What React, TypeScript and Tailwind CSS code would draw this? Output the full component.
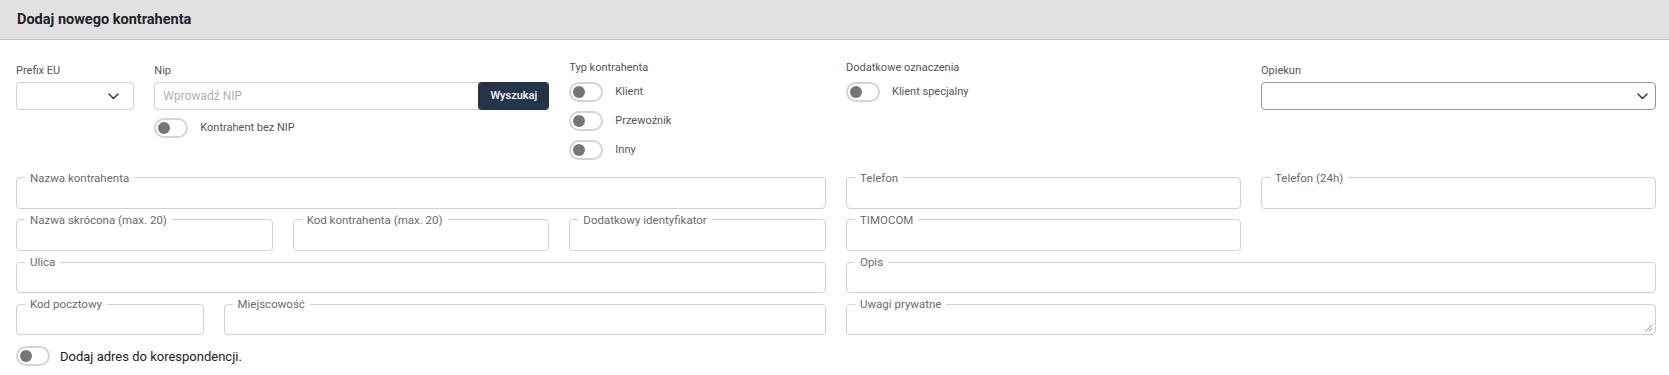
import React from "react";

function Toggle() {
  return (
    <span className="w-[34px] h-[20px] shrink-0 rounded-full border-2 border-[#d4d4d4] bg-white flex items-center pl-[2px]">
      <span className="w-[12px] h-[12px] rounded-full bg-[#767676]" />
    </span>
  );
}

function ToggleRow({ label }: { label: string }) {
  return (
    <div className="flex items-center gap-3">
      <Toggle />
      <span className="text-[11px] leading-[14px] text-[#555]">{label}</span>
    </div>
  );
}

function Chevron({ className }: { className?: string }) {
  return (
    <svg className={className} width="11" height="7" viewBox="0 0 11 7" fill="none">
      <path d="M1 1l4.5 4.5L10 1" stroke="#3a3a3a" strokeWidth="1.5" strokeLinecap="round" strokeLinejoin="round" />
    </svg>
  );
}

function Field({ label, grip }: { label: string; grip?: boolean }) {
  return (
    <fieldset className="relative h-[38px] border border-[#d0d1d6] rounded-[4px] min-w-0">
      <legend className="ml-2 px-[5px] text-[11.5px] leading-[14px] text-[#6b6b6b]">{label}</legend>
      {grip && (
        <svg className="absolute right-[2px] bottom-[2px]" width="8" height="8" viewBox="0 0 8 8">
          <path d="M7 1L1 7M7 4L4 7" stroke="#888" strokeWidth="0.9" />
        </svg>
      )}
    </fieldset>
  );
}

export default function App() {
  return (
    <div className="w-[1669px] min-h-[375px] bg-white [font-family:Roboto,'Liberation_Sans',sans-serif]">
      <div className="h-10 bg-[#e1e1e1] border-b border-[#c4c4c4] flex items-center pl-[17px]">
        <h1 className="text-[14.5px] font-bold text-[#1e2229]">Dodaj nowego kontrahenta</h1>
      </div>

      <div className="pl-4 pr-[13px]">
        <div className="grid grid-cols-12 gap-x-5">
          <div className="col-span-1 pt-6 flex flex-col">
            <label className="text-[11px] leading-[14px] text-[#555] mb-1">Prefix EU</label>
            <div className="h-[28px] border border-[#cfd0d4] rounded-[4px] flex items-center justify-end pr-[14px]">
              <Chevron />
            </div>
          </div>

          <div className="col-span-3 pt-6 flex flex-col">
            <label className="text-[11px] leading-[14px] text-[#555] mb-1">Nip</label>
            <div className="flex h-[28px]">
              <div className="flex-1 border border-[#cfd0d4] rounded-l-[4px] flex items-center pl-[8px] text-[12px] text-[#b0b0b0]">
                Wprowadź NIP
              </div>
              <button className="relative -ml-[2px] w-[71px] h-[28px] rounded-[4px] bg-[#263449] text-white text-[11px] font-medium">
                Wyszukaj
              </button>
            </div>
            <div className="mt-2">
              <ToggleRow label="Kontrahent bez NIP" />
            </div>
          </div>

          <div className="col-span-2 pt-[21px] flex flex-col">
            <label className="text-[11px] leading-[14px] text-[#555] mb-[7px]">Typ kontrahenta</label>
            <div className="flex flex-col gap-[9px]">
              <ToggleRow label="Klient" />
              <ToggleRow label="Przewoźnik" />
              <ToggleRow label="Inny" />
            </div>
          </div>

          <div className="col-span-3 pt-[21px] flex flex-col">
            <label className="text-[11px] leading-[14px] text-[#555] mb-[7px]">Dodatkowe oznaczenia</label>
            <ToggleRow label="Klient specjalny" />
          </div>

          <div className="col-span-3 pt-6 flex flex-col">
            <label className="text-[11px] leading-[14px] text-[#555] mb-1">Opiekun</label>
            <div className="h-[28px] border border-[#979797] rounded-[4px] flex items-center justify-end pr-[7px]">
              <Chevron />
            </div>
          </div>
        </div>

        <div className="grid grid-cols-2 gap-x-5 gap-y-[4.3px] mt-[10.5px]">
          <Field label="Nazwa kontrahenta" />
          <div className="grid grid-cols-2 gap-x-5">
            <Field label="Telefon" />
            <Field label="Telefon (24h)" />
          </div>

          <div className="grid grid-cols-3 gap-x-5">
            <Field label="Nazwa skrócona (max. 20)" />
            <Field label="Kod kontrahenta (max. 20)" />
            <Field label="Dodatkowy identyfikator" />
          </div>
          <div className="grid grid-cols-2 gap-x-5">
            <Field label="TIMOCOM" />
          </div>

          <Field label="Ulica" />
          <Field label="Opis" />

          <div className="grid grid-cols-12 gap-x-5">
            <div className="col-span-3">
              <Field label="Kod pocztowy" />
            </div>
            <div className="col-span-9">
              <Field label="Miejscowość" />
            </div>
          </div>
          <Field label="Uwagi prywatne" grip />
        </div>

        <div className="flex items-center gap-[10px] mt-[11px]">
          <Toggle />
          <span className="text-[13px] text-[#222]">Dodaj adres do korespondencji.</span>
        </div>
      </div>
    </div>
  );
}
